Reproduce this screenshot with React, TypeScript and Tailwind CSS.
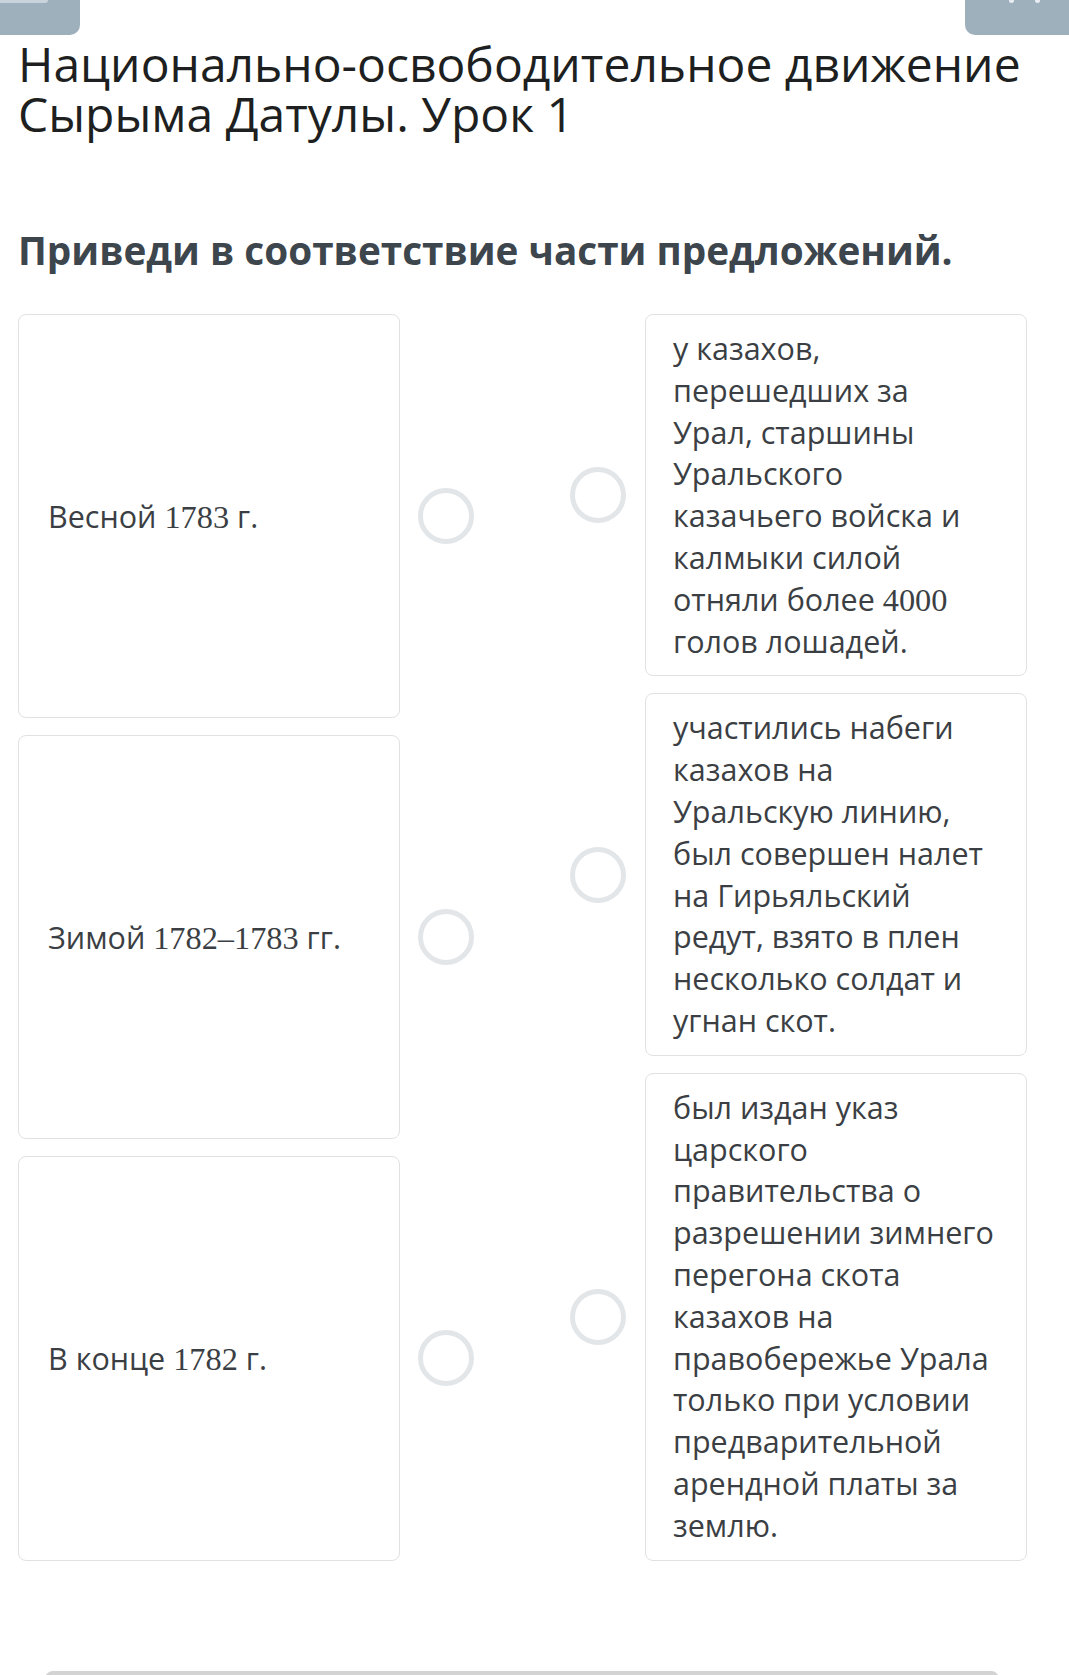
import React from "react";

const N = ({ children }: { children: React.ReactNode }) => (
  <span className="font-['Liberation_Serif',serif] text-[1.06em] leading-none">{children}</span>
);

const Circle = () => (
  <div className="w-[56px] h-[56px] shrink-0 rounded-full border-[5px] border-[#e3e6e9] bg-white" />
);

const leftItems: React.ReactNode[] = [
  <>Весной <N>1783</N> г.</>,
  <>Зимой <N>1782–1783</N> гг.</>,
  <>В конце <N>1782</N> г.</>,
];

const rightItems: React.ReactNode[] = [
  <>у казахов, перешедших за<br />Урал, старшины Уральского казачьего войска и калмыки силой отняли более <N>4000</N> голов лошадей.</>,
  <>участились набеги казахов на Уральскую линию, был совершен налет на Гирьяльский редут, взято в плен несколько солдат и угнан скот.</>,
  <>был издан указ царского правительства о разрешении зимнего перегона скота казахов на правобережье Урала только при условии предварительной арендной платы за землю.</>,
];

export default function App() {
  return (
    <div className="w-[1069px] min-h-[1675px] bg-white font-['Open_Sans',sans-serif] text-[#3b3f44] relative overflow-hidden">
      {/* header buttons (cut off) */}
      <div className="flex justify-between h-[35px]">
        <div className="relative w-[80px] h-[35px] bg-[#9fb0bd] rounded-br-[10px]">
          <div className="absolute left-0 top-0 w-[48px] h-[3px] bg-[#c9d3db] rounded-br-[3px]" />
        </div>
        <div className="relative w-[104px] h-[35px] bg-[#9fb0bd] rounded-bl-[10px]">
          <div className="absolute left-[44px] top-0 w-[5px] h-[3px] bg-[#e8edf1] rounded-b-full" />
          <div className="absolute left-[70px] top-0 w-[5px] h-[3px] bg-[#e8edf1] rounded-b-full" />
        </div>
      </div>

      <div className="pl-[18px] pr-[42px]">
        <h1 className="mt-[4px] text-[48px] leading-[50px] font-normal text-[#1e1f21]">
          Национально-освободительное движение Сырыма Датулы. Урок 1
        </h1>

        <h2 className="mt-[89px] text-[38.7px] leading-[44px] font-bold text-[#3d454d]">
          Приведи в соответствие части предложений.
        </h2>

        <div className="mt-[42px] flex justify-between">
          {/* left column */}
          <div className="flex flex-col gap-[17px]">
            {leftItems.map((t, i) => (
              <div key={i} className="flex-1 flex items-center gap-[18px]">
                <div className="w-[382px] h-full flex items-center border border-[#dfe1e3] rounded-[8px] bg-white pl-[29px] pr-[20px] text-[30.5px] leading-[42px]">
                  <span>{t}</span>
                </div>
                <Circle />
              </div>
            ))}
          </div>

          {/* right column */}
          <div className="flex flex-col gap-[17px]">
            {rightItems.map((t, i) => (
              <div key={i} className="flex items-center gap-[19px]">
                <Circle />
                <div className="w-[382px] border border-[#dfe1e3] rounded-[8px] bg-white pl-[27px] pr-[28px] py-[13px] text-[30.5px] leading-[41.8px]">
                  {t}
                </div>
              </div>
            ))}
          </div>
        </div>
      </div>

      {/* bottom button edge */}
      <div className="absolute left-[45px] top-[1671px] w-[954px] h-[20px] bg-[#d3d3d3] rounded-t-[8px]" />
    </div>
  );
}
